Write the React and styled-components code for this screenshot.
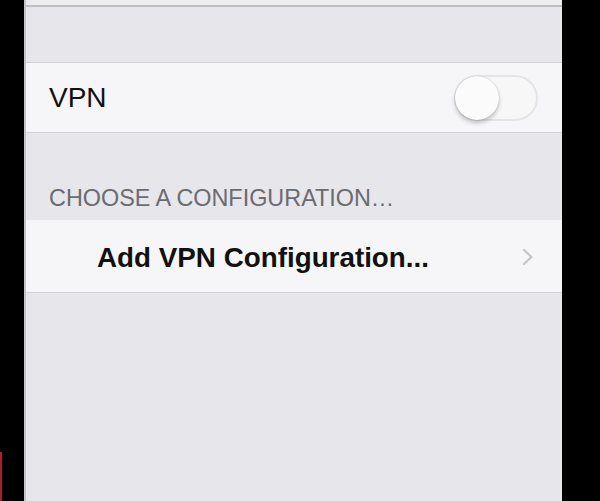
import React from 'react'
import styled, { createGlobalStyle } from 'styled-components'

const GlobalStyle = createGlobalStyle`
    html, body {
        margin: 0;
        padding: 0;
        background: #000;
    }
    body {
        font-family: "Liberation Sans", Arial, sans-serif;
    }
`

const Frame = styled.div`
    display: flex;
    width: 600px;
    height: 501px;
    background: #000;
    overflow: hidden;
`

const Bezel = styled.div`
    width: ${p => p.$width}px;
    display: flex;
    flex-direction: column;
    justify-content: flex-end;
`

const RedMark = styled.div`
    width: 2px;
    height: 49px;
    background: #a3222b;
`

const Screen = styled.div`
    width: 536px;
    border-left: 2px solid #c4c4c8;
    background: #e6e6eb;
    display: flex;
    flex-direction: column;
`

const TopStrip = styled.div`
    height: 5px;
    background: #ededef;
    border-bottom: 2px solid #bfbfc3;
`

const Gap = styled.div`
    height: ${p => p.$height}px;
    display: flex;
    align-items: flex-end;
    padding-left: 23px;
`

const SectionTitle = styled.div`
    font-size: 23.4px;
    color: #6b6b70;
    padding-bottom: 8px;
`

const Row = styled.div`
    height: ${p => p.$height}px;
    background: #f6f6f8;
    border-top: 1px solid ${p => p.$top ? '#d2d2d6' : 'transparent'};
    border-bottom: 1px solid #d2d2d6;
    display: flex;
    align-items: center;
    justify-content: space-between;
    padding: 0 24px 0 ${p => p.$indent}px;
`

const Label = styled.div`
    font-size: ${p => p.$bold ? 27.8 : 28}px;
    color: #111;
    font-weight: ${p => p.$bold ? 700 : 400};
    padding-top: ${p => p.$bold ? 3 : 0}px;
`

const Switch = styled.div`
    width: 84px;
    height: 46px;
    border-radius: 23px;
    box-sizing: border-box;
    border: 2px solid #e4e4e6;
    background: #f7f7f8;
    position: relative;
`

const Knob = styled.div`
    position: absolute;
    left: -1px;
    top: -1px;
    width: 44px;
    height: 44px;
    border-radius: 50%;
    background: #fbfbfb;
    box-shadow: 0 3px 4px rgba(0, 0, 0, 0.22), 0 0 1px rgba(0, 0, 0, 0.25);
`

const Chevron = styled.svg`
    width: 12px;
    height: 18px;
    margin-right: 4px;
`

const App = () => {
  return (
    <>
      <GlobalStyle />
      <Frame>
        <Bezel $width={24}>
          <RedMark />
        </Bezel>
        <Screen>
          <TopStrip />
          <Gap $height={55} />
          <Row $height={69} $top $indent={23}>
            <Label>VPN</Label>
            <Switch>
              <Knob />
            </Switch>
          </Row>
          <Gap $height={87}>
            <SectionTitle>CHOOSE A CONFIGURATION…</SectionTitle>
          </Gap>
          <Row $height={71} $indent={71}>
            <Label $bold>Add VPN Configuration...</Label>
            <Chevron viewBox="0 0 12 18">
              <path d="M2 2 L9.5 9 L2 16" fill="none" stroke="#c4c4c9" strokeWidth="2.2" strokeLinecap="round" strokeLinejoin="round" />
            </Chevron>
          </Row>
        </Screen>
        <Bezel $width={38} />
      </Frame>
    </>
  )
}

export default App
